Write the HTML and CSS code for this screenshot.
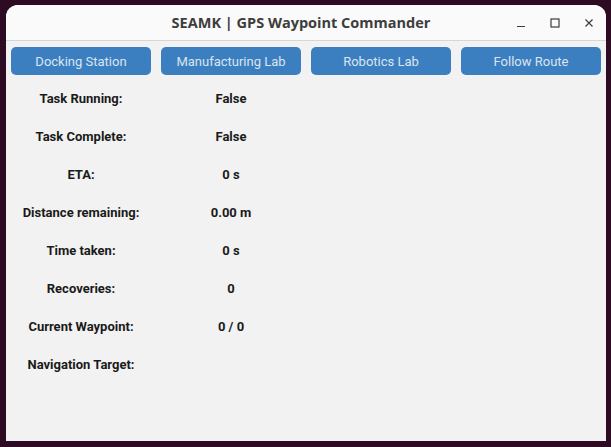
FILE: index.html
```html
<!DOCTYPE html>
<html>
<head>
<meta charset="utf-8">
<link rel="stylesheet" href="styles.css">
</head>
<body>
<div class="window">
  <div class="titlebar">
    <div class="title">SEAMK | GPS Waypoint Commander</div>
    <div class="controls">
      <svg class="ctl" width="10" height="10" viewBox="0 0 10 10"><path d="M1 8.5H9" stroke="#3d3d3d" stroke-width="1.2"/></svg>
      <svg class="ctl" width="10" height="10" viewBox="0 0 10 10"><rect x="1" y="1" width="8" height="8" fill="none" stroke="#3d3d3d" stroke-width="1.2"/></svg>
      <svg class="ctl" width="10" height="10" viewBox="0 0 10 10"><path d="M1.5 1.5L8.5 8.5M8.5 1.5L1.5 8.5" stroke="#3d3d3d" stroke-width="1.2"/></svg>
    </div>
  </div>
  <div class="content">
    <div class="grid">
      <div class="btn">Docking Station</div>
      <div class="btn">Manufacturing Lab</div>
      <div class="btn">Robotics Lab</div>
      <div class="btn">Follow Route</div>

      <div class="lbl">Task Running:</div><div class="lbl">False</div><div></div><div></div>
      <div class="lbl">Task Complete:</div><div class="lbl">False</div><div></div><div></div>
      <div class="lbl">ETA:</div><div class="lbl">0 s</div><div></div><div></div>
      <div class="lbl">Distance remaining:</div><div class="lbl">0.00 m</div><div></div><div></div>
      <div class="lbl">Time taken:</div><div class="lbl">0 s</div><div></div><div></div>
      <div class="lbl">Recoveries:</div><div class="lbl">0</div><div></div><div></div>
      <div class="lbl">Current Waypoint:</div><div class="lbl">0 / 0</div><div></div><div></div>
      <div class="lbl">Navigation Target:</div><div class="lbl"></div><div></div><div></div>
    </div>
  </div>
</div>
</body>
</html>
```
FILE: styles.css
```css
html, body {
  margin: 0;
  padding: 0;
  background: #2d0b22;
  width: 611px;
  height: 447px;
  overflow: hidden;
}
.window {
  margin: 5px 5px 0 6px;
  width: 600px;
  height: 436px;
  background: #f2f2f2;
  border-radius: 12px 12px 0 0;
  overflow: hidden;
  display: flex;
  flex-direction: column;
}
.titlebar {
  height: 35px;
  background: #fafafa;
  border-bottom: 1px solid #d6d6d6;
  position: relative;
  display: flex;
  align-items: center;
  justify-content: center;
}
.title {
  font-family: "Open Sans", "DejaVu Sans", sans-serif;
  font-weight: 700;
  font-size: 14.5px;
  color: #3d3d3d;
  margin-left: -10px;
}
.controls {
  position: absolute;
  right: 12px;
  top: 13px;
  display: flex;
  gap: 24px;
}
.ctl { display: block; }
.content {
  flex: 1;
}
.grid {
  display: grid;
  grid-template-columns: repeat(4, 150px);
  grid-auto-rows: 38px;
  font-family: Roboto, "Liberation Sans", sans-serif;
  font-size: 13px;
}
.btn {
  margin: 5px 5px 5px 5px;
  background: #3b7fc1;
  color: #dce4ee;
  border-radius: 5px;
  display: flex;
  align-items: center;
  justify-content: center;
  margin-top: 6px;
  margin-bottom: 4px;
}
.lbl {
  display: flex;
  align-items: center;
  justify-content: center;
  font-weight: 700;
  color: #1a1a1a;
}
```
